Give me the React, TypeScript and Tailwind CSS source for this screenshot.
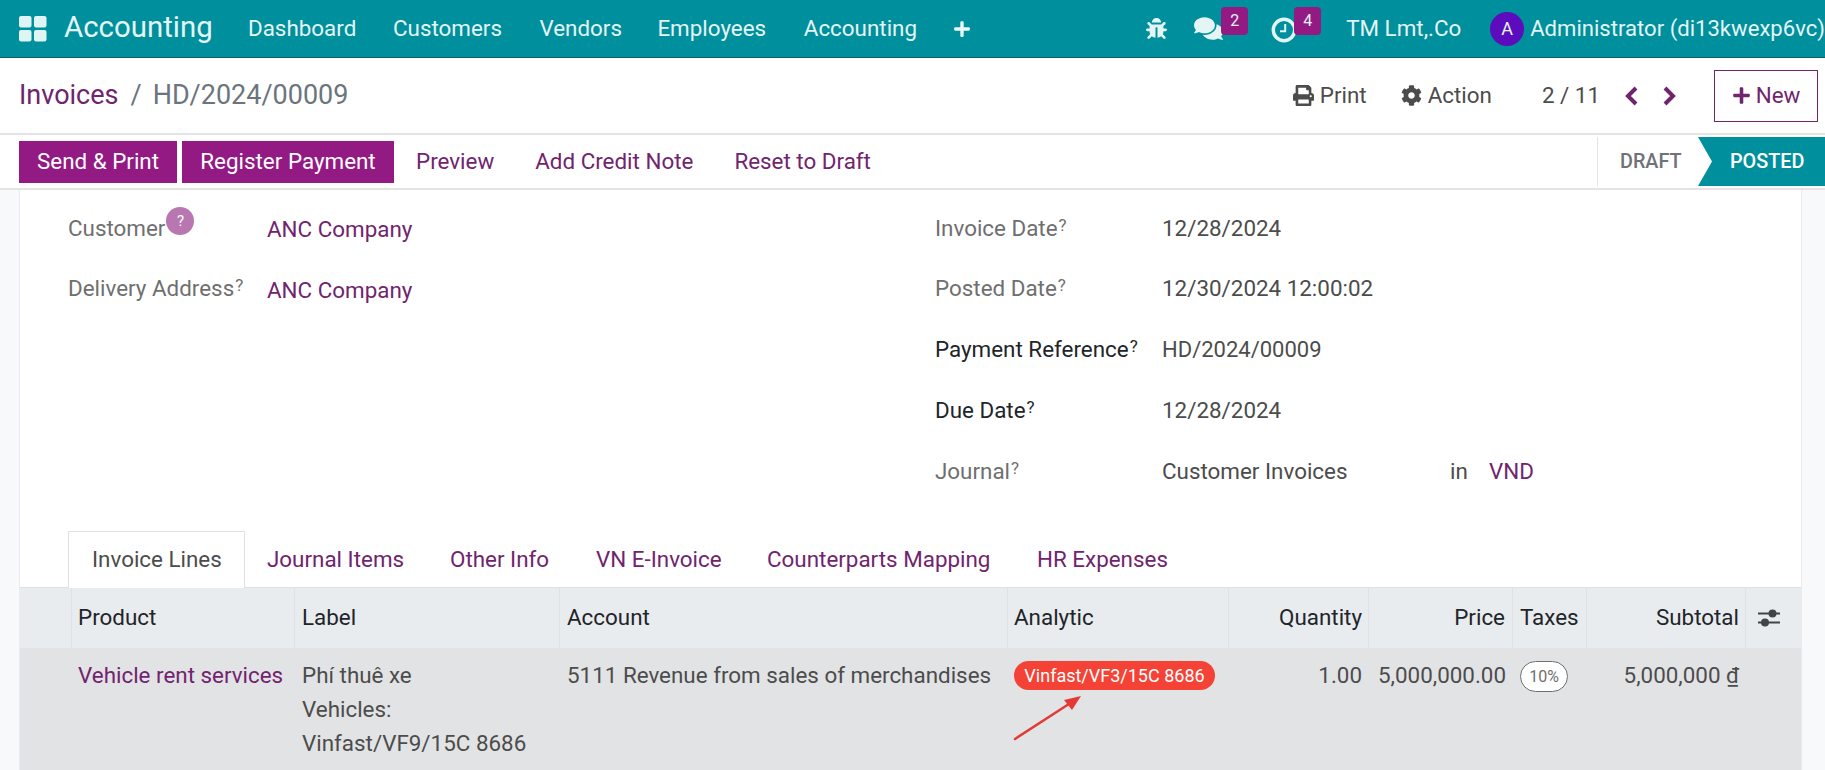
import React from "react";
import { FaBug, FaComments, FaPrint, FaCog, FaPlus } from "react-icons/fa";

const Lbl = ({ t, dark }: { t: string; dark?: boolean }) => (
  <span className={dark ? "text-[#212529]" : "text-[#6f6f6f]"}>
    {t}
    <sup className="text-[17px] relative -top-[5px] ml-[1px]">?</sup>
  </span>
);

const Row = ({ children }: { children: React.ReactNode }) => (
  <div className="h-[60.8px] flex items-center">{children}</div>
);

const Chevron = ({ d }: { d: string }) => (
  <svg width="15" height="20" viewBox="0 0 15 20" fill="none" stroke="#71246e" strokeWidth="4" className="shrink-0">
    <path d={d} />
  </svg>
);

export default function App() {
  return (
    <div className="relative w-[1825px] h-[770px] overflow-hidden bg-white text-[22.4px] text-[#4c4c4c] font-['Roboto',sans-serif]">
      {/* navbar */}
      <div className="h-[58px] bg-[#008f9c] border-b border-[#0b5f66] flex items-center text-[#e4f5f6]">
        <svg width="28" height="26" viewBox="0 0 28 26" className="ml-[19px] shrink-0" fill="#dff5f4">
          <rect x="0" y="0" width="12.5" height="11.5" rx="2" />
          <rect x="15" y="0" width="12.5" height="11.5" rx="2" />
          <rect x="0" y="14" width="12.5" height="11.5" rx="2" />
          <rect x="15" y="14" width="12.5" height="11.5" rx="2" />
        </svg>
        <span className="ml-[17px] text-[29.4px] leading-none w-[184px] shrink-0 -mt-[1px]">Accounting</span>
        <span className="w-[108px]">Dashboard</span>
        <span className="ml-[37px] w-[110px]">Customers</span>
        <span className="ml-[37px] w-[82px]">Vendors</span>
        <span className="ml-[36px] w-[110px]">Employees</span>
        <span className="ml-[37px] w-[114px]">Accounting</span>
        <FaPlus className="ml-[36px] text-[18px] text-[#eafafa] shrink-0" />
        <FaBug className="ml-[175px] text-[21px] shrink-0" />
        <FaComments className="ml-[27px] text-[29px] shrink-0" />
        <span className="bg-[#931a83] rounded-[4px] w-[27px] h-[28px] flex items-center justify-center text-[16px] -ml-[2px] -mt-[16px] shrink-0">2</span>
        <svg width="26" height="26" viewBox="0 0 26 26" fill="none" stroke="#e4f5f6" className="ml-[23px] shrink-0 mt-[2px]">
          <circle cx="13" cy="13" r="10.7" strokeWidth="3.4" />
          <path d="M14.2 7v7.2H9" strokeWidth="2" />
        </svg>
        <span className="bg-[#931a83] rounded-[4px] w-[27px] h-[28px] flex items-center justify-center text-[16px] -ml-[3px] -mt-[16px] shrink-0">4</span>
        <span className="ml-[25px] w-[115px] whitespace-nowrap shrink-0">TM Lmt,.Co</span>
        <span className="ml-[29px] w-[34px] h-[34px] rounded-full bg-[#5c0bbd] flex items-center justify-center text-[18px] shrink-0">A</span>
        <span className="ml-[6px] whitespace-nowrap text-[22.1px]">Administrator (di13kwexp6vc)</span>
      </div>

      {/* control panel */}
      <div className="h-[77px] border-b-2 border-[#e4e4e4] flex items-center pl-[19px]">
        <span className="text-[27px] text-[#71246e]">Invoices</span>
        <span className="text-[27px] text-[#6c757d] ml-[12px]">/</span>
        <span className="text-[27px] text-[#6c757d] ml-[11px]">HD/2024/00009</span>
        <div className="flex-1" />
        <FaPrint className="text-[21px]" />
        <span className="ml-[6px]">Print</span>
        <FaCog className="ml-[34px] text-[21px]" />
        <span className="ml-[6px]">Action</span>
        <span className="ml-[50px]">2 / 11</span>
        <span className="ml-[24px]"><Chevron d="M12 2 L4 10 L12 18" /></span>
        <span className="ml-[23px]"><Chevron d="M3 2 L11 10 L3 18" /></span>
        <div className="ml-[37px] mr-[7px] w-[104px] h-[52px] border border-[#71246e] flex items-center justify-center text-[#71246e]">
          <FaPlus className="text-[19px] mr-[5px]" />
          New
        </div>
      </div>

      {/* action bar */}
      <div className="h-[55px] border-b-2 border-[#e4e4e4] flex items-center pl-[19px]">
        <div className="w-[158px] h-[42px] bg-[#931a83] text-white flex items-center justify-center">Send &amp; Print</div>
        <div className="ml-[5px] w-[212px] h-[42px] bg-[#931a83] text-white flex items-center justify-center">Register Payment</div>
        <span className="ml-[22px] text-[#71246e]">Preview</span>
        <span className="ml-[41px] text-[#71246e]">Add Credit Note</span>
        <span className="ml-[41px] text-[#71246e]">Reset to Draft</span>
        <div className="flex-1" />
        <div className="h-[49px] border-l border-[#e4e4e4] flex items-center">
          <span className="ml-[22px] w-[78px] text-[19.8px] font-medium text-[#6f7277]">DRAFT</span>
          <div className="w-[127px] h-[49px] bg-[#008f9c] flex items-center pl-[32px] text-[19.8px] font-medium text-white [clip-path:polygon(0_0,100%_0,100%_100%,0_100%,14px_50%)]">POSTED</div>
        </div>
      </div>

      {/* sheet */}
      <div className="flex h-[581px]">
        <div className="w-[20px] bg-[#f8f9fa] border-r border-[#e9ecef]" />
        <div className="flex-1 flex flex-col">
          <div className="flex pt-[8px] h-[341px]">
            <div className="w-[915px] pl-[48px]">
              <Row>
                <span className="w-[199px] flex items-center text-[#6f6f6f]">
                  Customer
                  <span className="w-[28px] h-[28px] ml-[1px] rounded-full bg-[#b877b0] text-white text-[15px] flex items-center justify-center -mt-[14px]">?</span>
                </span>
                <span className="text-[#71246e] pt-[2px]">ANC Company</span>
              </Row>
              <Row>
                <span className="w-[199px]"><Lbl t="Delivery Address" /></span>
                <span className="text-[#71246e] pt-[3px]">ANC Company</span>
              </Row>
            </div>
            <div>
              <Row><span className="w-[227px]"><Lbl t="Invoice Date" /></span>12/28/2024</Row>
              <Row><span className="w-[227px]"><Lbl t="Posted Date" /></span>12/30/2024 12:00:02</Row>
              <Row><span className="w-[227px]"><Lbl t="Payment Reference" dark /></span><span className="text-[22px]">HD/2024/00009</span></Row>
              <Row><span className="w-[227px]"><Lbl t="Due Date" dark /></span>12/28/2024</Row>
              <Row>
                <span className="w-[227px]"><Lbl t="Journal" /></span>
                <span className="w-[288px]">Customer Invoices</span>
                <span className="w-[39px]">in</span>
                <span className="text-[#71246e]">VND</span>
              </Row>
            </div>
          </div>

          {/* tabs */}
          <div className="h-[57px] flex items-stretch pl-[48px] text-[#71246e] border-b border-[#dee2e6]">
            <div className="w-[177px] bg-white border border-b-0 border-[#dee2e6] flex items-center pl-[23px] text-[#4c4c4c] -mb-px">Invoice Lines</div>
            <span className="ml-[22px] flex items-center pt-[2px] w-[183px]">Journal Items</span>
            <span className="flex items-center pt-[2px] w-[146px]">Other Info</span>
            <span className="flex items-center pt-[2px] w-[171px]">VN E-Invoice</span>
            <span className="flex items-center pt-[2px] w-[270px]">Counterparts Mapping</span>
            <span className="flex items-center pt-[2px]">HR Expenses</span>
          </div>

          {/* table */}
          <div className="grid grid-cols-[52px_223px_265px_448px_221px_140px_144px_74px_159px_55px]">
            <div className="h-[60px] bg-[#e9ecef] border-r border-[#dee2e6]" />
            {[
              ["Product", "", "pl-[6px]"],
              ["Label", "", "pl-[7px]"],
              ["Account", "", "pl-[7px]"],
              ["Analytic", "", "pl-[6px]"],
              ["Quantity", "r", "pr-[6px]"],
              ["Price", "r", "pr-[7px]"],
              ["Taxes", "", "pl-[7px]"],
              ["Subtotal", "r", "pr-[6px]"],
            ].map(([t, a, p]) => (
              <div key={t} className={`h-[60px] bg-[#e9ecef] border-r border-[#dee2e6] flex items-center text-[#212529] ${p} ${a ? "justify-end" : ""}`}>{t}</div>
            ))}
            <div className="h-[60px] bg-[#e9ecef] flex items-center pl-[11px]">
              <svg width="24" height="22" viewBox="0 0 24 22" fill="none" stroke="#3f4549" strokeWidth="2">
                <path d="M1 6.5h22M1 15.5h22" />
                <circle cx="15.5" cy="6.5" r="4" fill="#3f4549" stroke="none" />
                <circle cx="8" cy="15.5" r="4" fill="#3f4549" stroke="none" />
              </svg>
            </div>

            <div className="h-[122px] bg-[#e2e3e5]" />
            <div className="h-[122px] bg-[#e2e3e5] pt-[11px] pl-[6px] text-[#71246e]">Vehicle rent services</div>
            <div className="h-[122px] bg-[#e2e3e5] pt-[10px] pl-[7px] leading-[34px]">
              Phí thuê xe<br />Vehicles:<br />Vinfast/VF9/15C 8686
            </div>
            <div className="h-[122px] bg-[#e2e3e5] pt-[11px] pl-[7px]">5111 Revenue from sales of merchandises</div>
            <div className="h-[122px] bg-[#e2e3e5] pt-[13px] pl-[6px]">
              <span className="w-[201px] h-[29px] rounded-full bg-[#f44336] text-white text-[18px] flex items-center justify-center">Vinfast/VF3/15C 8686</span>
            </div>
            <div className="h-[122px] bg-[#e2e3e5] pt-[11px] pr-[7px] text-right">1.00</div>
            <div className="h-[122px] bg-[#e2e3e5] pt-[11px] pr-[7px] text-right">5,000,000.00</div>
            <div className="h-[122px] bg-[#e2e3e5] pt-[13px] pl-[7px]">
              <span className="w-[48px] h-[31px] rounded-full bg-white border border-[#6f6f6f] text-[16px] text-[#6f6f6f] flex items-center justify-center">10%</span>
            </div>
            <div className="h-[122px] bg-[#e2e3e5] pt-[11px] pr-[7px] text-right">5,000,000 <u>₫</u></div>
            <div className="h-[122px] bg-[#e2e3e5]" />
          </div>
        </div>
        <div className="w-[24px] bg-[#f8f9fa] border-l border-[#e9ecef]" />
      </div>

      {/* annotation arrow */}
      <svg className="absolute left-[1010px] top-[692px]" width="75" height="55" viewBox="0 0 75 55" fill="none">
        <path d="M5 47 L62 10" stroke="#e53935" strokeWidth="2.5" strokeLinecap="round" />
        <path d="M71 4 L54 8 L62 18 Z" fill="#e53935" />
      </svg>
    </div>
  );
}
